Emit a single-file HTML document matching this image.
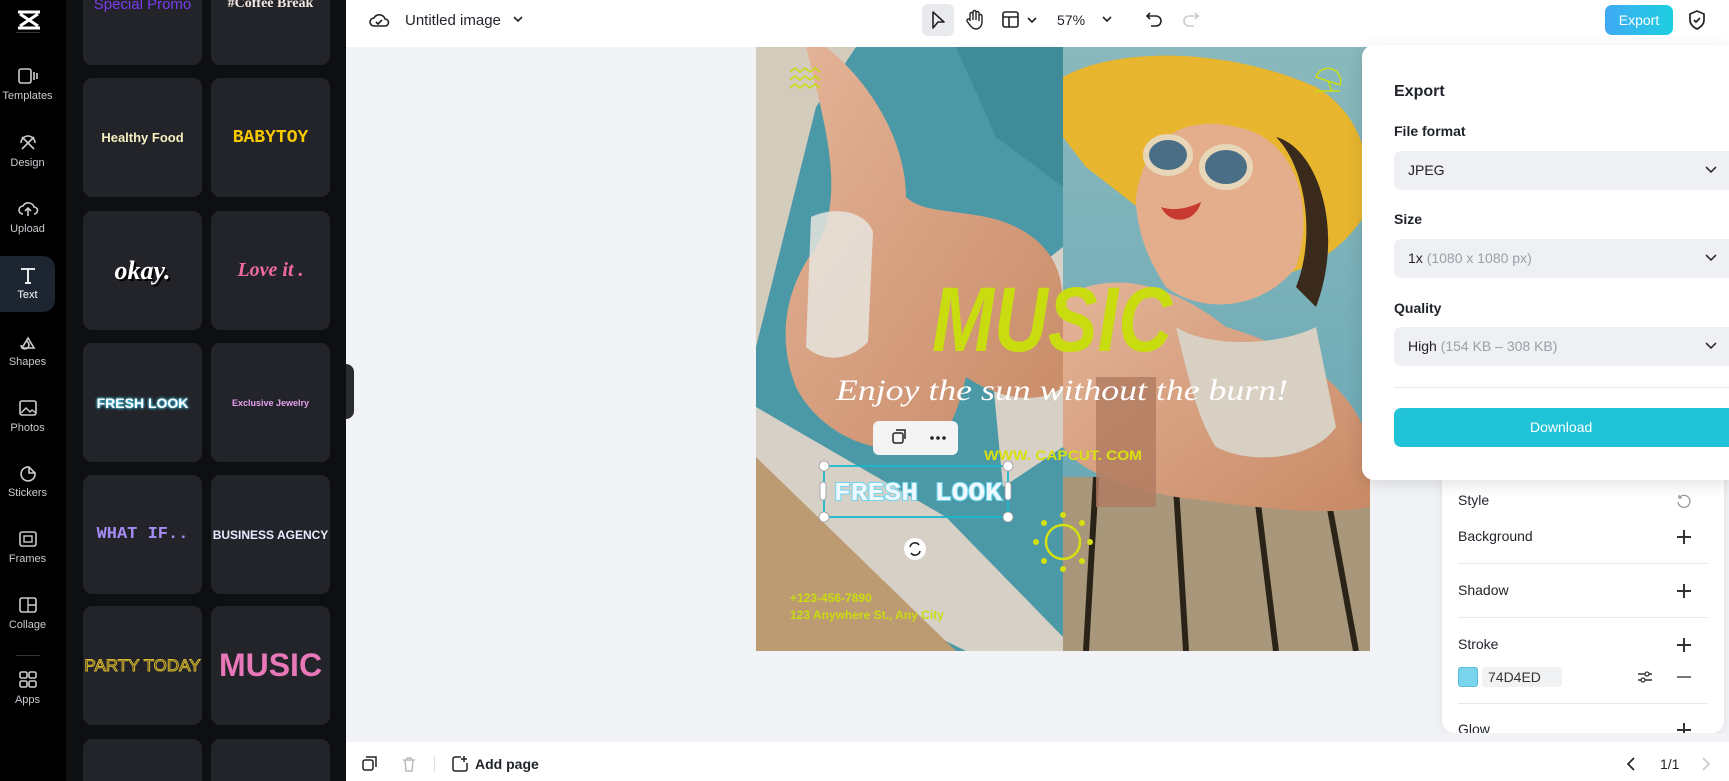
<!DOCTYPE html>
<html><head><meta charset="utf-8"><style>
*{box-sizing:border-box;margin:0;padding:0}
html,body{width:1729px;height:781px;overflow:hidden}
body{background:#f1f3f6;font-family:"Liberation Sans",sans-serif;position:relative}
.abs{position:absolute}
#rail{left:0;top:0;width:66px;height:781px;background:#000}
.nav{position:absolute;left:0;width:55px;text-align:center;color:#c9cbd0;font-size:11px}
.nav svg{display:block;margin:0 auto 4px}
#panel{left:66px;top:0;width:280px;height:781px;background:#0e0f11;overflow:hidden}
.card{position:absolute;width:119px;height:119px;background:#232429;border-radius:9px;display:flex;align-items:center;justify-content:center;font-weight:bold;white-space:nowrap}
#top{left:346px;top:0;width:1383px;height:47px;background:#fff}
#bottom{left:346px;top:742px;width:1383px;height:39px;background:#fff}
.sel{position:absolute;left:1394px;width:335px;height:39px;background:#eef0f3;border-radius:7px 0 0 7px;font-size:14px;color:#222;padding:11px 14px}
.sel i{font-style:normal;color:#9aa0a8}
.chev{position:absolute;right:11px;top:14px}
.plab{position:absolute;left:1394px;font-size:14px;font-weight:bold;color:#1f2329}
.prow{position:absolute;left:1458px;font-size:14px;color:#1f2329}
.plus{position:absolute;left:1677px;width:14px;height:14px}
.plus:before{content:"";position:absolute;left:0;top:6px;width:14px;height:1.6px;background:#333}
.plus:after{content:"";position:absolute;left:6px;top:0;width:1.6px;height:14px;background:#333}
.hr{position:absolute;left:1458px;width:250px;height:1px;background:#e6e8eb}
</style></head><body>

<div id="rail" class="abs">
<svg class="abs" style="left:16px;top:10px" width="26" height="20" viewBox="0 0 26 20"><path d="M2 2h22M2 18h22M4 4l18 12M22 4L4 16" stroke="#fff" stroke-width="3" fill="none"/></svg>
<div class="abs" style="left:16px;top:32px;width:24px;height:1px;background:#333"></div>
<div class="nav" style="top:66px"><svg width="22" height="20"><rect x="2" y="3" width="12" height="14" rx="2" stroke="#ccc" stroke-width="1.6" fill="none"/><path d="M17 6v8M20 7v6" stroke="#ccc" stroke-width="1.6"/></svg>Templates</div>
<div class="nav" style="top:133px"><svg width="22" height="20"><path d="M5 4l12 12M17 4L5 16M4 10a6 6 0 0 1 14 0" stroke="#ccc" stroke-width="1.6" fill="none"/></svg>Design</div>
<div class="nav" style="top:199px"><svg width="22" height="20"><path d="M6 15a4 4 0 0 1 0-8a6 6 0 0 1 11 1a3.5 3.5 0 0 1 0 7M11 17v-7M8 12l3-3 3 3" stroke="#ccc" stroke-width="1.6" fill="none"/></svg>Upload</div>
<div class="abs" style="left:0;top:256px;width:55px;height:56px;background:#1c2530;border-radius:0 12px 12px 0"></div>
<div class="nav" style="top:265px;color:#fff"><svg width="22" height="20"><path d="M4 4h14M11 4v14M8 18h6" stroke="#fff" stroke-width="1.8" fill="none"/></svg>Text</div>
<div class="nav" style="top:332px"><svg width="22" height="20"><path d="M11 6l6 10H5z M9 9a4 4 0 1 1-5 4" stroke="#ccc" stroke-width="1.6" fill="none"/></svg>Shapes</div>
<div class="nav" style="top:398px"><svg width="22" height="20"><rect x="3" y="3" width="16" height="14" rx="2" stroke="#ccc" stroke-width="1.6" fill="none"/><path d="M4 15l5-5 4 4 2-2 4 3" stroke="#ccc" stroke-width="1.4" fill="none"/></svg>Photos</div>
<div class="nav" style="top:463px"><svg width="22" height="20"><path d="M18 12a7 7 0 1 1-6-8l6 6z M12 4v6h6" stroke="#ccc" stroke-width="1.6" fill="none"/></svg>Stickers</div>
<div class="nav" style="top:529px"><svg width="22" height="20"><rect x="3" y="3" width="16" height="14" rx="2" stroke="#ccc" stroke-width="1.6" fill="none"/><rect x="7" y="7" width="8" height="6" stroke="#ccc" stroke-width="1.4" fill="none"/></svg>Frames</div>
<div class="nav" style="top:595px"><svg width="22" height="20"><rect x="3" y="3" width="16" height="14" rx="2" stroke="#ccc" stroke-width="1.6" fill="none"/><path d="M11 3v14M11 10h8" stroke="#ccc" stroke-width="1.4"/></svg>Collage</div>
<div class="abs" style="left:16px;top:655px;width:24px;height:1px;background:#333"></div>
<div class="nav" style="top:670px"><svg width="22" height="20"><rect x="3" y="2" width="7" height="6" rx="1.5" stroke="#ccc" stroke-width="1.6" fill="none"/><rect x="12" y="2" width="7" height="6" rx="1.5" stroke="#ccc" stroke-width="1.6" fill="none"/><rect x="3" y="11" width="7" height="6" rx="1.5" stroke="#ccc" stroke-width="1.6" fill="none"/><rect x="12" y="11" width="7" height="6" rx="1.5" stroke="#ccc" stroke-width="1.6" fill="none"/></svg>Apps</div>
</div>

<div id="panel" class="abs">
<div class="card" style="left:17px;top:0;height:65px;border-radius:0 0 9px 9px;align-items:flex-start"><span style="color:#7a3cf0;font-size:15px;font-weight:normal;margin-top:-4px">Special Promo</span></div>
<div class="card" style="left:145px;top:0;height:65px;border-radius:0 0 9px 9px;align-items:flex-start"><span style="color:#f4e6e0;font-size:14px;font-family:'Liberation Serif',serif;margin-top:-4px">#Coffee Break</span></div>
<div class="card" style="left:17px;top:78px;color:#f7f0c0;font-size:13px">Healthy Food</div>
<div class="card" style="left:145px;top:78px;color:#f8c800;font-size:18px;font-family:'Liberation Mono',monospace">BABYTOY</div>
<div class="card" style="left:17px;top:211px;color:#fff;font-size:26px;font-style:italic;font-family:'Liberation Serif',serif;text-shadow:2px 2px 0 #000">okay.</div>
<div class="card" style="left:145px;top:211px;color:#f06aa0;font-size:20px;font-style:italic;font-family:'Liberation Serif',serif">Love it .</div>
<div class="card" style="left:17px;top:343px;color:#fff;font-size:14px;text-shadow:0 0 2px #4cd0f0,0 0 3px #4cd0f0">FRESH LOOK</div>
<div class="card" style="left:145px;top:343px;color:#e6a0f0;font-size:9px">Exclusive Jewelry</div>
<div class="card" style="left:17px;top:475px;color:#a48cf4;font-size:17px;font-family:'Liberation Mono',monospace">WHAT IF..</div>
<div class="card" style="left:145px;top:475px;color:#e8ecff;font-size:12px">BUSINESS AGENCY</div>
<div class="card" style="left:17px;top:606px;color:#1a1a1a;font-size:17px;-webkit-text-stroke:1px #d8b830;font-weight:normal">PARTY TODAY</div>
<div class="card" style="left:145px;top:606px;color:#e878b8;font-size:32px">MUSIC</div>
<div class="card" style="left:17px;top:739px;height:42px;border-radius:9px 9px 0 0"></div>
<div class="card" style="left:145px;top:739px;height:42px;border-radius:9px 9px 0 0"></div>
</div>
<div class="abs" style="left:346px;top:364px;width:8px;height:55px;background:#2a2b2f;border-radius:0 8px 8px 0"></div>

<div id="top" class="abs"></div>
<svg class="abs" style="left:368px;top:11px" width="22" height="18"><path d="M6 15a4 4 0 0 1 0-8a6 6 0 0 1 11 1a3.5 3.5 0 0 1 0 7z M8 11l2 2 4-4" stroke="#222" stroke-width="1.6" fill="none"/></svg>
<div class="abs" style="left:405px;top:12px;font-size:15px;color:#1f2329">Untitled image</div>
<svg class="abs" style="left:512px;top:14px" width="12" height="10"><path d="M2 3l4 4 4-4" stroke="#222" stroke-width="1.6" fill="none"/></svg>
<div class="abs" style="left:922px;top:4px;width:32px;height:32px;background:#e8eaed;border-radius:6px"></div>
<svg class="abs" style="left:929px;top:10px" width="18" height="20"><path d="M4 2l11 10h-6l-5 6z" stroke="#222" stroke-width="1.6" fill="none" stroke-linejoin="round"/></svg>
<svg class="abs" style="left:964px;top:9px" width="20" height="22"><path d="M6 12V5a1.5 1.5 0 0 1 3 0v6V3a1.5 1.5 0 0 1 3 0v8V4a1.5 1.5 0 0 1 3 0v8V7a1.5 1.5 0 0 1 3 0v6c0 4-3 7-6 7s-5-2-7-5l-2-3a1.5 1.5 0 0 1 3-1z" stroke="#222" stroke-width="1.4" fill="none"/></svg>
<svg class="abs" style="left:1001px;top:10px" width="40" height="20"><rect x="2" y="2" width="15" height="15" rx="2" stroke="#222" stroke-width="1.6" fill="none"/><path d="M2 7h15M8 7v10M27 8l4 4 4-4" stroke="#222" stroke-width="1.6" fill="none"/></svg>
<div class="abs" style="left:1057px;top:12px;font-size:14px;color:#1f2329">57%</div>
<svg class="abs" style="left:1101px;top:14px" width="12" height="10"><path d="M2 3l4 4 4-4" stroke="#222" stroke-width="1.6" fill="none"/></svg>
<svg class="abs" style="left:1144px;top:10px" width="20" height="18"><path d="M6 3L3 6l3 3M3 6h9a5 5 0 0 1 0 10H7" stroke="#222" stroke-width="1.6" fill="none"/></svg>
<svg class="abs" style="left:1181px;top:10px" width="20" height="18"><path d="M14 3l3 3-3 3M17 6H8a5 5 0 0 0 0 10h5" stroke="#ccc" stroke-width="1.6" fill="none"/></svg>
<div class="abs" style="left:1605px;top:5px;width:68px;height:30px;border-radius:7px;background:linear-gradient(90deg,#3fa9f5,#1ccfe0);color:#fff;font-size:14px;text-align:center;line-height:30px">Export</div>
<svg class="abs" style="left:1687px;top:9px" width="20" height="22"><path d="M10 2l7 3v6c0 4-3 7-7 9c-4-2-7-5-7-9V5z M7 11l2 2 4-4" stroke="#222" stroke-width="1.7" fill="none"/></svg>

<svg class="abs" style="left:756px;top:47px" width="614" height="604" viewBox="0 0 614 604">
<defs>
<linearGradient id="sky" x1="0" y1="0" x2="0" y2="1"><stop offset="0" stop-color="#8ab8bc"/><stop offset="1" stop-color="#5fa4b4"/></linearGradient>
<linearGradient id="skin" x1="0" y1="0" x2="1" y2="1"><stop offset="0" stop-color="#e4b498"/><stop offset="1" stop-color="#c88a66"/></linearGradient>
</defs>
<rect width="307" height="604" fill="#4b99a6"/>
<path d="M0 0h100L60 60 40 140 20 220 0 300z" fill="#d3ccbc"/>
<path d="M200 0h107v140L240 90z" fill="#3f8c98"/>
<path d="M0 360L190 470 307 590V604H210L0 500z" fill="#d6d0c6"/>
<path d="M0 410l200 194H0z" fill="#bd9b72"/>
<path d="M230 260l77-60v200l-60 40z" fill="#d6d0c6"/>
<path d="M70 0C120 40 150 100 150 150C170 170 220 160 260 180C300 200 307 230 307 260V340C280 360 240 350 210 330C200 370 190 400 160 400C110 410 60 380 40 340C20 290 30 240 60 200C90 150 70 80 50 0z" fill="url(#skin)"/>
<path d="M55 170c25-12 55-5 62 15l-5 110c-20 20-45 20-62 5z" fill="#e6e4de" opacity=".85"/>
<rect x="307" width="307" height="604" fill="url(#sky)"/>
<path d="M307 430h307v174H307z" fill="#a8977a"/>
<path d="M340 430l-10 174M420 440l10 164M500 440l20 164M570 440l30 164" stroke="#2a2418" stroke-width="6"/>
<path d="M307 250C360 220 420 240 470 280C540 300 600 340 614 400V460C560 470 500 460 420 450C360 440 320 420 307 400z" fill="url(#skin)"/>
<path d="M420 280C450 300 520 300 560 280L580 380C560 410 500 420 460 400C440 370 430 320 420 280z" fill="#d8d0c2"/>
<path d="M307 30C360 0 470 0 560 40C610 70 614 120 614 160C590 200 560 220 520 230L420 190 330 120 307 90z" fill="#e7b62e"/>
<path d="M380 150C390 80 440 70 480 80C540 90 560 160 540 220C510 260 450 270 410 240C390 210 380 180 380 150z" fill="#e4ae8c"/>
<path d="M520 90C560 100 590 180 560 260L540 240C560 190 550 120 520 90z" fill="#3a2a1c"/>
<ellipse cx="412" cy="108" rx="22" ry="18" fill="#4a6e86" stroke="#e8d6b8" stroke-width="6"/>
<ellipse cx="470" cy="120" rx="24" ry="20" fill="#4a6e86" stroke="#e8d6b8" stroke-width="6"/>
<path d="M405 160c15 5 30 0 40-5c-5 20-30 25-40 5z" fill="#c83a30"/>
<path d="M340 330h60v130h-60z" fill="#b07a60" opacity=".8"/>
<path d="M34 25l5-4 5 4 5-4 5 4 5-4 5 4M34 33l5-4 5 4 5-4 5 4 5-4 5 4M34 41l5-4 5 4 5-4 5 4 5-4 5 4" stroke="#c8dc10" stroke-width="1.5" fill="none"/>
<path d="M560 30a12 12 0 0 1 24 8zM572 34l4 10M558 44h26" stroke="#c8dc10" stroke-width="1.5" fill="none"/>
<text x="176" y="304" fill="#c8dc10" font-family="Liberation Sans,sans-serif" font-weight="bold" font-size="92" font-style="italic" textLength="240" lengthAdjust="spacingAndGlyphs">MUSIC</text>
<text x="80" y="353" fill="#fff" font-family="Liberation Serif,serif" font-style="italic" font-size="30" textLength="452" lengthAdjust="spacingAndGlyphs">Enjoy the sun without the burn!</text>
<text x="228" y="413" fill="#d8e010" font-family="Liberation Sans,sans-serif" font-weight="bold" font-size="14" textLength="158" lengthAdjust="spacingAndGlyphs">WWW. CAPCUT. COM</text>
<text x="78" y="453" fill="#f0f8ff" stroke="#6fd6ee" stroke-width="2" paint-order="stroke" font-family="Liberation Mono,monospace" font-weight="bold" font-size="26" textLength="168" lengthAdjust="spacingAndGlyphs">FRESH LOOK</text>
<text x="34" y="555" fill="#c8dc10" font-family="Liberation Sans,sans-serif" font-weight="bold" font-size="12">+123-456-7890</text>
<text x="34" y="572" fill="#c8dc10" font-family="Liberation Sans,sans-serif" font-weight="bold" font-size="12">123 Anywhere St., Any City</text>
<circle cx="307" cy="495" r="17" stroke="#d4e010" stroke-width="2.5" fill="none"/>
<g fill="#d4e010"><circle cx="307" cy="468" r="3"/><circle cx="307" cy="522" r="3"/><circle cx="280" cy="495" r="3"/><circle cx="334" cy="495" r="3"/><circle cx="288" cy="476" r="3"/><circle cx="326" cy="476" r="3"/><circle cx="288" cy="514" r="3"/><circle cx="326" cy="514" r="3"/></g>
<rect x="68" y="419" width="184" height="51" stroke="#1ab8d0" stroke-width="1.8" fill="none"/>
<g fill="#fff" stroke="#999" stroke-width=".8"><circle cx="68" cy="419" r="5"/><circle cx="252" cy="419" r="5"/><circle cx="68" cy="470" r="5"/><circle cx="252" cy="470" r="5"/><rect x="64" y="435" width="6" height="18" rx="3"/><rect x="249" y="435" width="6" height="18" rx="3"/></g>
<circle cx="159" cy="502" r="11" fill="#fff"/>
<path d="M154 500a5 5 0 0 1 9-2M164 504a5 5 0 0 1-9 2" stroke="#222" stroke-width="1.6" fill="none"/>
<rect x="117" y="374" width="85" height="34" rx="6" fill="#f4f4f4"/>
<rect x="137" y="386" width="10" height="10" rx="2" stroke="#222" stroke-width="1.5" fill="none"/><path d="M140 383h9v9" stroke="#222" stroke-width="1.5" fill="none"/>
<g fill="#222"><circle cx="176" cy="391" r="1.8"/><circle cx="182" cy="391" r="1.8"/><circle cx="188" cy="391" r="1.8"/></g>
</svg>

<div class="abs" style="left:1442px;top:440px;width:282px;height:293px;background:#fff;border-radius:12px;box-shadow:0 2px 10px rgba(0,0,0,.08)"></div>
<div class="prow" style="top:492px">Style</div>
<svg class="abs" style="left:1676px;top:493px" width="16" height="16"><path d="M3 5a6 6 0 1 1-1 4M3 2v3h3" stroke="#999" stroke-width="1.3" fill="none"/></svg>
<div class="prow" style="top:528px">Background</div><div class="plus" style="top:530px"></div>
<div class="hr" style="top:563px"></div>
<div class="prow" style="top:582px">Shadow</div><div class="plus" style="top:584px"></div>
<div class="hr" style="top:617px"></div>
<div class="prow" style="top:636px">Stroke</div><div class="plus" style="top:638px"></div>
<div class="abs" style="left:1458px;top:667px;width:20px;height:20px;background:#7ad4ee;border-radius:3px;border:1px solid #5bbcd8"></div>
<div class="abs" style="left:1482px;top:667px;width:80px;height:20px;background:#f0f2f4;border-radius:3px;font-size:14px;color:#333;padding:2px 6px">74D4ED</div>
<svg class="abs" style="left:1636px;top:668px" width="18" height="18"><path d="M2 6h14M2 12h14" stroke="#333" stroke-width="1.4"/><circle cx="11" cy="6" r="2" fill="#fff" stroke="#333" stroke-width="1.3"/><circle cx="7" cy="12" r="2" fill="#fff" stroke="#333" stroke-width="1.3"/></svg>
<div class="abs" style="left:1677px;top:676px;width:14px;height:1.5px;background:#777"></div>
<div class="hr" style="top:703px"></div>
<div class="prow" style="top:721px">Glow</div><div class="plus" style="top:723px"></div>
<div class="abs" style="left:1442px;top:733px;width:287px;height:9px;background:#f1f3f6"></div>

<div class="abs" style="left:1362px;top:45px;width:367px;height:435px;background:#fff;border-radius:12px 0 0 12px;box-shadow:0 4px 16px rgba(0,0,0,.12)"></div>
<div class="plab" style="top:83px;font-size:16px">Export</div>
<div class="plab" style="top:123px">File format</div>
<div class="sel" style="top:151px">JPEG<svg class="chev" width="14" height="10"><path d="M2 2l5 5 5-5" stroke="#333" stroke-width="1.6" fill="none"/></svg></div>
<div class="plab" style="top:211px">Size</div>
<div class="sel" style="top:239px">1x <i>(1080 x 1080 px)</i><svg class="chev" width="14" height="10"><path d="M2 2l5 5 5-5" stroke="#333" stroke-width="1.6" fill="none"/></svg></div>
<div class="plab" style="top:300px">Quality</div>
<div class="sel" style="top:327px">High <i>(154 KB – 308 KB)</i><svg class="chev" width="14" height="10"><path d="M2 2l5 5 5-5" stroke="#333" stroke-width="1.6" fill="none"/></svg></div>
<div class="abs" style="left:1394px;top:387px;width:335px;height:1px;background:#e6e8eb"></div>
<div class="abs" style="left:1394px;top:408px;width:335px;height:39px;background:#21c3d8;border-radius:7px 0 0 7px;color:#fff;font-size:14px;line-height:39px;padding-left:136px">Download</div>

<div id="bottom" class="abs"></div>
<svg class="abs" style="left:361px;top:755px" width="18" height="18"><rect x="2" y="5" width="10" height="10" rx="2" stroke="#222" stroke-width="1.5" fill="none"/><path d="M5 2h10v10" stroke="#222" stroke-width="1.5" fill="none"/></svg>
<svg class="abs" style="left:400px;top:755px" width="18" height="18"><path d="M3 5h12M7 5V3h4v2M5 5l1 11h6l1-11" stroke="#bbb" stroke-width="1.5" fill="none"/></svg>
<div class="abs" style="left:434px;top:756px;width:1px;height:16px;background:#ddd"></div>
<svg class="abs" style="left:451px;top:755px" width="18" height="18"><path d="M10 2H4a2 2 0 0 0-2 2v10a2 2 0 0 0 2 2h10a2 2 0 0 0 2-2V8M13 1v6M10 4h6" stroke="#222" stroke-width="1.5" fill="none"/></svg>
<div class="abs" style="left:475px;top:756px;font-size:14px;font-weight:bold;color:#1f2329">Add page</div>
<svg class="abs" style="left:1624px;top:756px" width="14" height="16"><path d="M10 2L4 8l6 6" stroke="#222" stroke-width="1.7" fill="none"/></svg>
<div class="abs" style="left:1660px;top:756px;font-size:14px;color:#1f2329">1/1</div>
<svg class="abs" style="left:1699px;top:756px" width="14" height="16"><path d="M4 2l6 6-6 6" stroke="#ccc" stroke-width="1.7" fill="none"/></svg>
</body></html>
